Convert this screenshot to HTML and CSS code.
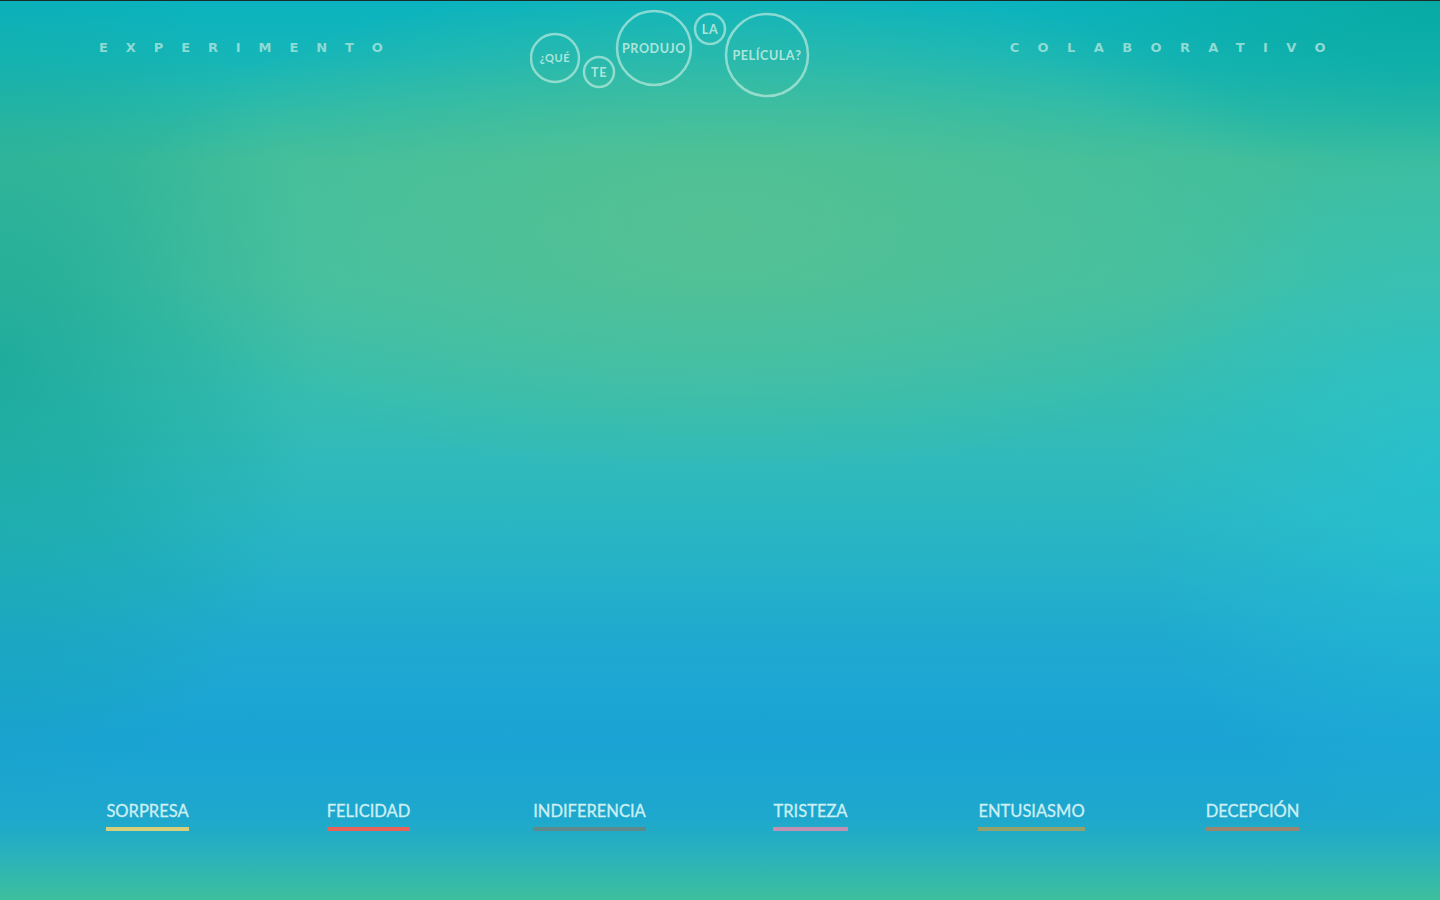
FILE: index.html
```html
<!DOCTYPE html>
<html lang="es">
<head>
<meta charset="utf-8">
<title>¿Qué te produjo la película?</title>
<link rel="stylesheet" href="styles.css">
</head>
<body>
<div class="page">
  <header class="header">
    <div class="word word-left">EXPERIMENTO</div>
    <svg class="bubbles" width="280" height="100" viewBox="0 0 280 100">
      <g fill="none" stroke="rgba(205,240,228,0.62)" stroke-width="2.5">
        <circle cx="25" cy="58" r="24"/>
        <circle cx="69" cy="72" r="15"/>
        <circle cx="124" cy="48" r="37"/>
        <circle cx="180" cy="29" r="15"/>
        <circle cx="237" cy="55" r="41"/>
      </g>
      <g class="bubble-text" text-anchor="middle">
        <text x="25" y="62" font-size="11">¿QUÉ</text>
        <text x="69" y="76.5" font-size="12.5">TE</text>
        <text x="124" y="52.5" font-size="12.5">PRODUJO</text>
        <text x="180" y="34" font-size="12.5">LA</text>
        <text x="237" y="60" font-size="12.5">PELÍCULA?</text>
      </g>
    </svg>
    <div class="word word-right">COLABORATIVO</div>
  </header>
  <main class="stage"></main>
  <footer class="emotions">
    <div class="emotion"><span class="label bar-sorpresa">SORPRESA</span></div>
    <div class="emotion"><span class="label bar-felicidad">FELICIDAD</span></div>
    <div class="emotion"><span class="label bar-indiferencia">INDIFERENCIA</span></div>
    <div class="emotion"><span class="label bar-tristeza">TRISTEZA</span></div>
    <div class="emotion"><span class="label bar-entusiasmo">ENTUSIASMO</span></div>
    <div class="emotion"><span class="label bar-decepcion">DECEPCIÓN</span></div>
  </footer>
</div>
</body>
</html>
```
FILE: styles.css
```css
html, body {
  margin: 0;
  padding: 0;
  height: 100%;
}
body {
  font-family: "Lato", "Open Sans", sans-serif;
  overflow: hidden;
  border-top: 1px solid #1c2a2a;
  box-sizing: border-box;
  background:
    radial-gradient(ellipse 42% 28% at 50% 25%, rgba(88,194,146,0.85), rgba(88,194,146,0) 100%),
    radial-gradient(ellipse 22% 50% at 0% 40%, rgba(14,160,145,0.6), rgba(14,160,145,0) 100%),
    radial-gradient(ellipse 22% 40% at 100% 52%, rgba(36,196,216,0.6), rgba(36,196,216,0) 100%),
    radial-gradient(ellipse 30% 20% at 100% 0%, rgba(6,166,152,0.7), rgba(6,166,152,0) 100%),
    linear-gradient(to bottom, #09b3bf 0px, #16b6b8 60px, #40be9c 160px, #42bfa2 280px, #35bdb2 400px, #2ab6c2 520px, #1fa9d0 640px, #1aa3d4 740px, #1ea8cd 820px, #2bb3b8 860px, #3ebf9c 900px);
}
.page {
  height: 100%;
  display: flex;
  flex-direction: column;
}
.header {
  display: grid;
  grid-template-columns: 431px 280px 1fr;
  padding-left: 99px;
  padding-right: 96px;
  align-items: start;
}
.word {
  margin-top: 38px;
  font-family: "DejaVu Sans", sans-serif;
  font-weight: 700;
  font-size: 13px;
  line-height: 18px;
  letter-spacing: 17.9px;
  color: rgba(150, 222, 215, 0.95);
}
.word-right {
  justify-self: end;
  letter-spacing: 18.4px;
}
.bubbles {
  display: block;
  margin-top: -1px;
}
.bubble-text {
  font-family: "Lato", sans-serif;
  font-weight: 700;
  fill: rgba(210, 242, 232, 0.8);
  letter-spacing: 0.6px;
}
.stage {
  flex: 1;
}
.emotions {
  display: grid;
  grid-template-columns: repeat(6, 1fr);
  padding: 0 77px 69px 37px;
}
.emotion {
  text-align: center;
}
.label {
  display: inline-block;
  font-size: 16.5px;
  font-weight: 400;
  line-height: 22px;
  color: #cdeff4;
  padding-bottom: 5px;
  border-bottom: 4px solid;
  -webkit-text-stroke: 0.3px #cdeff4;
}
.bar-sorpresa { border-color: #d8cf7a; }
.bar-felicidad { border-color: #e8625a; }
.bar-indiferencia { border-color: #5f8a8c; }
.bar-tristeza { border-color: #c290b0; }
.bar-entusiasmo { border-color: #94a36e; }
.bar-decepcion { border-color: #9a8670; }
```
